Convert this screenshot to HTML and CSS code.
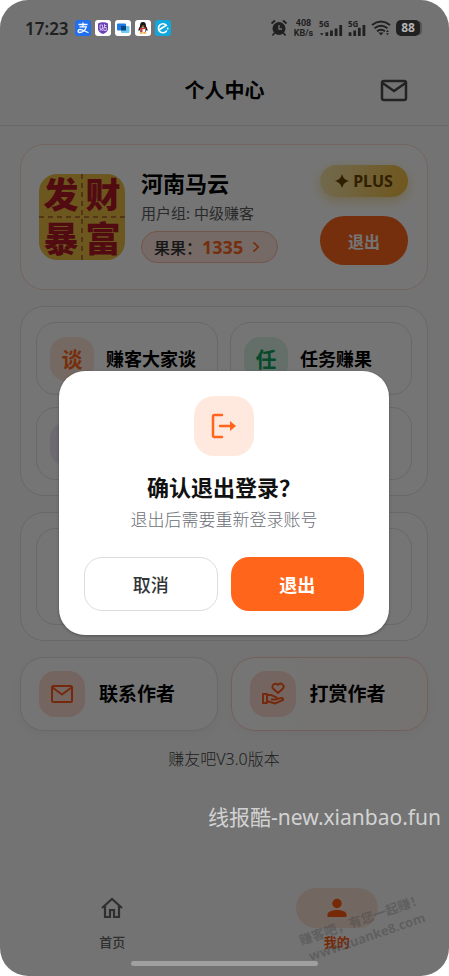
FILE: index.html
```html
<!DOCTYPE html>
<html lang="zh-CN">
<head>
<meta charset="utf-8">
<meta name="viewport" content="width=device-width, initial-scale=1">
<title>个人中心</title>
<link rel="stylesheet" href="styles.css">
</head>
<body>
<div class="screen">
  <div class="statusbar">
    <span class="clock">17:23</span>
    <div class="apps">
      <svg viewBox="0 0 16 16"><rect width="16" height="16" rx="3" fill="#1f6fee"/><path d="M3.5 4.5h9M8 2.5v4.3M4.5 6.9h6.8C10 10.500 7 12.500 4.500 12.500 2.500 12.500 2.500 9.500 5 9.500c3 0 5 2 8.500 3" fill="none" stroke="#fff" stroke-width="1.300"/></svg>
      <svg viewBox="0 0 16 16"><rect width="16" height="16" rx="3" fill="#fff"/><path d="M3 3.500Q8 1 13 3.500V9q0 3-5 5-5-2-5-5z" fill="#6a3fb5"/><path d="M5 5h2.500v4H5zM6.200 9l-1.500 2M6.500 9l1 2M9.500 4v3.500M9.500 5.500h2M8.800 7.500h2.500v3H8.800z" fill="none" stroke="#e4d8f8" stroke-width=".8"/></svg>
      <svg viewBox="0 0 16 16"><rect width="16" height="16" rx="3" fill="#fff"/><rect x="2" y="3.500" width="9" height="7" rx="1" fill="#1d79e8"/><rect x="6" y="6" width="8.500" height="7" rx="1" fill="#6dc8f5"/><path d="M6 6h5v4.500H6z" fill="#07477f"/></svg>
      <svg viewBox="0 0 16 16"><rect width="16" height="16" rx="3" fill="#fff"/><path d="M8 2C5.500 2 5 4 5 6.200 3.800 8 3 10 3.700 11c.4 0 .8-.5 1-.9.2 1 .5 1.700 1 2.200h4.600c.5-.5.800-1.200 1-2.200.2.400.6.900 1 .900C13 10 12.200 8 11 6.200 11 4 10.500 2 8 2z" fill="#161616"/><ellipse cx="8" cy="10" rx="2.500" ry="2.700" fill="#fff"/><path d="M4.800 7.200Q8 9 11.200 7.200l.2 1.200Q8 10 4.700 8.400z" fill="#e02b2b"/><path d="M6 8.500h1.500V12H6z" fill="#e02b2b"/><ellipse cx="6.300" cy="13" rx="1.800" ry=".8" fill="#eda41c"/><ellipse cx="9.700" cy="13" rx="1.800" ry=".8" fill="#eda41c"/><ellipse cx="8" cy="6" rx="1.500" ry=".6" fill="#eda41c"/></svg>
      <svg viewBox="0 0 16 16"><rect width="16" height="16" rx="3" fill="#12a7dc"/><path d="M5 9.300 11.300 5.300A4.500 4.500 0 1 0 11.500 11" fill="none" stroke="#fff" stroke-width="1.600" stroke-linecap="round"/><circle cx="12.700" cy="8.500" r=".9" fill="#fff"/></svg>
    </div>
    <div class="signals">
      <svg class="alarm" viewBox="0 0 18 18"><circle cx="9" cy="9.500" r="6.500" fill="#202020"/><path d="M1.500 4.500 5 1.500M16.500 4.500 13 1.500M4.500 14l-2 2.500M13.500 14l2 2.500" stroke="#202020" stroke-width="1.800"/><path d="M9 6v4h3" fill="none" stroke="#757575" stroke-width="1.300"/></svg>
      <span class="rate"><span>408</span><span>KB/s</span></span>
      <span class="cell"><span>5G</span><svg viewBox="0 0 24 13"><path d="m0 10 2 2.500L4 10zM6 9h3v4H6zM11 7h3v6h-3zM16 5h3v8h-3zM21 1h3v12h-3z"/></svg></span>
      <span class="cell cell-short"><span>5G</span><svg viewBox="0 0 18 13"><path d="M0 9h3v4H0zM5 7h3v6H5zM10 4h3v9h-3zM15 1h3v12h-3z"/></svg></span>
      <svg class="wifi" viewBox="0 0 20 16"><path d="M1 5q9-7 18 0M3.500 8.300q6.500-5 13 0M6 11.300q4-3 8 0" fill="none" stroke="#202020" stroke-width="1.900"/><path d="M7.500 12.500h5L10 15.500zM15 12l1.500-2 1.500 2zM15 13.300h3l-1.500 2z" fill="#202020"/></svg>
      <span class="battery">88</span>
    </div>
  </div>

  <header class="topbar">
    <h1>个人中心</h1>
    <button class="mail" aria-label="消息"><svg viewBox="0 0 28 24"><rect x="2" y="2" width="24" height="19" rx="2"/><path d="m2.500 4 11.500 8L25.500 4"/></svg></button>
  </header>

  <main class="content">
    <section class="card profile">
      <svg class="avatar" viewBox="0 0 86 86"><rect width="86" height="86" rx="18" fill="#ecbd45"/><path d="M43 0v86M0 43h86" stroke="#b87732" stroke-width="2" stroke-dasharray="5 4"/><g class="avatar-text"><text x="22" y="34">发</text><text x="64" y="34">财</text><text x="22" y="78">暴</text><text x="64" y="78">富</text></g></svg>
      <div class="identity">
        <h2>河南马云</h2>
        <p>用户组: 中级赚客</p>
        <a class="points" href="#points">果果：<b>1335</b><svg viewBox="0 0 10 12"><path d="m2 2 4 4-4 4"/></svg></a>
      </div>
      <div class="account">
        <span class="plus"><svg viewBox="0 0 16 16"><path d="M8 0q1.500 6.500 8 8-6.500 1.500-8 8-1.500-6.500-8-8 6.500-1.500 8-8z"/></svg>PLUS</span>
        <button class="leave">退出</button>
      </div>
    </section>

    <section class="card grid">
      <a class="tile" href="#talk"><span class="badge orange">谈</span>赚客大家谈</a>
      <a class="tile" href="#task"><span class="badge green">任</span>任务赚果</a>
      <div class="tile"><span class="badge violet"></span></div>
      <div class="tile"></div>
    </section>

    <section class="card panel"><div class="tile tall"></div></section>

    <div class="contacts">
      <a class="contact" href="#contact"><span class="badge rose"><svg viewBox="0 0 24 20"><rect x="2" y="2" width="20" height="16" rx="1.500"/><path d="m2.500 3.500 9.500 7 9.500-7"/></svg></span>联系作者</a>
      <a class="contact warm" href="#reward"><span class="badge rose"><svg viewBox="0 0 24 24"><path d="M17 11 12 6.500A3 3 0 0 1 17 3a3 3 0 0 1 5 3.500zM2 12h4v9H2zM6 13h4l5 2.200q1.500 1-.2 2.200H10M14.800 17.400l5.500-1.500q2.200.2 1.700 2L14 21.500 6 19"/></svg></span>打赏作者</a>
    </div>
    <p class="version">赚友吧V3.0版本</p>
  </main>

  <nav class="tabs">
    <a href="#home"><span class="tab-icon"><svg viewBox="0 0 24 24"><path d="M2 12 12 3l10 9M5 10v11h5v-7h4v7h5V10" fill="none" stroke="currentColor" stroke-width="2.200"/></svg></span>首页</a>
    <a class="active" href="#me"><span class="tab-icon"><svg viewBox="0 0 24 24"><circle cx="12" cy="7.500" r="4.700" fill="currentColor"/><path d="M2.500 21v-2.500c0-6 19-6 19 0V21z" fill="currentColor"/></svg></span>我的</a>
  </nav>

  <div class="overlay">
    <div class="dialog" role="dialog" aria-modal="true" aria-labelledby="dialog-title">
      <span class="dialog-icon"><svg viewBox="0 0 30 30"><path d="M13 4H5.500Q4 4 4 5.500v19Q4 26 5.500 26H13M11 15h12"/><path class="head" d="m21 10 6 5-6 5z"/></svg></span>
      <h2 id="dialog-title">确认退出登录？</h2>
      <p>退出后需要重新登录账号</p>
      <div class="actions"><button class="cancel">取消</button><button class="confirm">退出</button></div>
    </div>
  </div>
  <span class="home-indicator"></span>
  <span class="source">线报酷-new.xianbao.fun</span>
  <span class="stamp">赚客吧，有您一起赚！<br>www.zuanke8.com</span>
</div>
</body>
</html>
```
FILE: styles.css
```css
* { box-sizing: border-box; }
body {
  margin: 0;
  background: #fff;
  color: #000;
  font-family: "Noto Sans", "Noto Sans CJK SC", sans-serif;
}
h1, h2, p { margin: 0; }
a { color: inherit; text-decoration: none; }
button { font: inherit; padding: 0; border: 0; cursor: pointer; }
svg { display: block; }

.screen {
  position: relative;
  display: flex;
  flex-direction: column;
  min-height: 100vh;
  overflow: hidden;
  border-radius: 28px;
  background: #fbfbfb;
}

/* system bar */
.statusbar {
  position: relative;
  z-index: 3;
  display: flex;
  align-items: center;
  height: 56px;
  padding: 0 29px 0 25px;
  color: #202020;
}
.clock { font-size: 17px; font-weight: 600; }
.apps { display: flex; gap: 4px; margin-left: 6px; }
.apps svg { width: 16px; height: 16px; }
.signals { display: flex; align-items: center; gap: 5px; margin-left: auto; }
.alarm { width: 18px; height: 18px; }
.rate {
  display: grid;
  width: 21px;
  font-family: Roboto, sans-serif;
  font-size: 9px;
  line-height: 10px;
  font-weight: 700;
  text-align: center;
}
.cell { width: 24px; font-size: 8px; line-height: 8px; font-weight: 700; }
.cell-short { width: 18px; }
.cell > span { display: block; height: 4px; }
.cell svg { width: 100%; height: 12px; fill: #202020; }
.wifi { width: 20px; height: 16px; }
.battery {
  width: 24px;
  border-radius: 5px;
  background: #202020;
  box-shadow: 3px 0 0 -1px #555;
  color: #b5b5b5;
  font-size: 12px;
  line-height: 16px;
  font-weight: 700;
  text-align: center;
}

.topbar {
  display: grid;
  grid-template-columns: 1fr auto 1fr;
  align-items: center;
  height: 70px;
  padding: 0 41px;
  border-bottom: 1px solid #e2e2e2;
}
.topbar h1 { grid-column: 2; font-size: 20px; line-height: 28px; font-weight: 700; }
.mail { justify-self: end; background: none; }
.mail svg { width: 28px; height: 24px; fill: none; stroke: #4c4c4c; stroke-width: 2.500; }

.content { flex: 1; display: flex; flex-direction: column; gap: 16px; padding: 18px 21px 0 20px; }
.card { border: 1px solid #e2e2e2; border-radius: 24px; background: #fff; }
.profile {
  display: flex;
  align-items: center;
  gap: 16px;
  height: 146px;
  padding: 0 19px 0 18px;
  border-color: #fbd9cc;
}
.avatar { width: 86px; height: 86px; flex: none; overflow: visible; }
.avatar-text { fill: #b01825; font-size: 35px; font-weight: 900; text-anchor: middle; }
.identity { flex: 1; white-space: nowrap; }
.identity h2 { font-size: 22px; line-height: 24px; font-weight: 700; }
.identity p { margin: 8px 0; font-size: 15px; line-height: 20px; color: #5c5c5c; }
.points {
  display: flex;
  align-items: center;
  width: fit-content;
  height: 32px;
  padding: 0 12px;
  border: 1px solid #fbb9a3;
  border-radius: 16px;
  background: #ffe6df;
  color: #333;
  font-size: 16px;
  font-weight: 500;
}
.points b { color: #ff661c; font-size: 18px; font-weight: 700; }
.points svg { width: 16px; height: 14px; margin-left: 6px; fill: none; stroke: #ff661c; stroke-width: 1.500; }
.account { display: flex; flex-direction: column; gap: 19px; padding-bottom: 4px; }
.plus {
  display: flex;
  align-items: center;
  justify-content: center;
  gap: 4px;
  height: 32px;
  border-radius: 16px;
  background: linear-gradient(100deg, #f7e7ae, #f3bd3d);
  box-shadow: 0 4px 12px #f6e2a5;
  color: #694600;
  font-size: 16px;
  font-weight: 700;
}
.plus svg { width: 14px; height: 14px; fill: #694600; }
.leave {
  width: 88px;
  height: 49px;
  border-radius: 25px;
  background: #ff661c;
  color: #fff;
  font-size: 16px;
  font-weight: 700;
}

.grid { display: grid; grid-template-columns: 1fr 1fr; gap: 12px; padding: 15px; }
.tile {
  display: flex;
  align-items: center;
  gap: 12px;
  height: 73px;
  padding: 0 13px;
  border: 1px solid #e2e2e2;
  border-radius: 20px;
  font-size: 18px;
  line-height: 24px;
  font-weight: 700;
  white-space: nowrap;
}
.badge {
  display: grid;
  place-items: center;
  flex: none;
  width: 44px;
  height: 44px;
  border-radius: 16px;
  font-size: 21px;
}
.orange { background: #ffe4d8; color: #ff661c; }
.green { background: #dcf2e6; color: #10a25c; }
.violet { background: #eee8f6; }
.rose { width: 46px; height: 46px; background: #ffddd3; }
.panel { padding: 15px; }
.tall { height: 97px; }

.contacts { display: grid; grid-template-columns: 1fr 1fr; gap: 13px; }
.contact {
  display: flex;
  align-items: center;
  gap: 14px;
  height: 74px;
  padding: 0 18px;
  border: 1px solid #e2e2e2;
  border-radius: 24px;
  background: #fff;
  box-shadow: 0 4px 12px #f2f2f2;
  font-size: 19px;
  line-height: 24px;
  font-weight: 700;
  white-space: nowrap;
}
.contact svg { width: 24px; height: 24px; fill: none; stroke: #ff5a1c; stroke-width: 2; stroke-linejoin: round; }
.warm { border-color: #fbd0c2; background: linear-gradient(90deg, #fff, #fffaf5); }
.version { font-size: 16px; line-height: 24px; font-weight: 300; color: #444; text-align: center; }

.tabs { display: grid; grid-template-columns: 1fr 1fr; height: 88px; }
.tabs a {
  display: flex;
  flex-direction: column;
  align-items: center;
  gap: 4px;
  color: #666;
  font-size: 13px;
  line-height: 20px;
  font-weight: 500;
}
.tab-icon { display: grid; place-items: center; width: 82px; height: 40px; border-radius: 20px; }
.tab-icon svg { width: 24px; height: 24px; }
.tabs .active { color: #ff5a10; font-weight: 700; }
.active .tab-icon { background: #fbe0d6; }

/* confirmation */
.overlay {
  position: absolute;
  inset: 0;
  z-index: 2;
  display: grid;
  place-items: center;
  padding: 30px 60px 0 59px;
  background: rgb(0 0 0 / 54%);
}
.dialog {
  display: flex;
  flex-direction: column;
  align-items: center;
  width: 100%;
  padding: 25px 25px 24px;
  border-radius: 26px;
  background: #fff;
  box-shadow: 0 1px 3px rgb(0 0 0 / 30%);
}
.dialog-icon { display: grid; place-items: center; width: 60px; height: 60px; border-radius: 20px; background: #ffe9df; }
.dialog-icon svg { width: 30px; height: 30px; fill: none; stroke: #ff661c; stroke-width: 2.500; stroke-linecap: round; }
.dialog-icon .head { fill: #ff661c; stroke: none; }
.dialog h2 { margin-top: 16px; font-size: 22px; line-height: 30px; font-weight: 700; color: #111; }
.dialog p { margin-top: 6px; font-size: 17px; line-height: 24px; font-weight: 300; color: #6b6e76; white-space: nowrap; }
.actions { display: grid; grid-template-columns: 1fr 1fr; gap: 13px; width: 100%; margin-top: 25px; }
.actions button { height: 54px; border-radius: 18px; font-size: 18px; }
.actions .cancel { border: 1px solid #dcdcde; background: #fff; color: #333438; font-weight: 500; }
.actions .confirm { background: #ff661c; color: #fff; font-weight: 700; }

.home-indicator {
  position: absolute;
  z-index: 3;
  bottom: 10px;
  left: 50%;
  width: 187px;
  height: 5px;
  margin-left: -94px;
  border-radius: 3px;
  background: #a0a0a0;
}
.source { position: absolute; z-index: 3; right: 8px; bottom: 145px; color: #d2d2d2; font-size: 21px; line-height: 28px; white-space: nowrap; }
.stamp {
  position: absolute;
  z-index: 3;
  right: 20px;
  bottom: 30px;
  color: rgb(70 70 70 / 45%);
  font-size: 13px;
  line-height: 18px;
  font-weight: 700;
  text-align: center;
  transform: rotate(-19deg);
  white-space: nowrap;
}
```
